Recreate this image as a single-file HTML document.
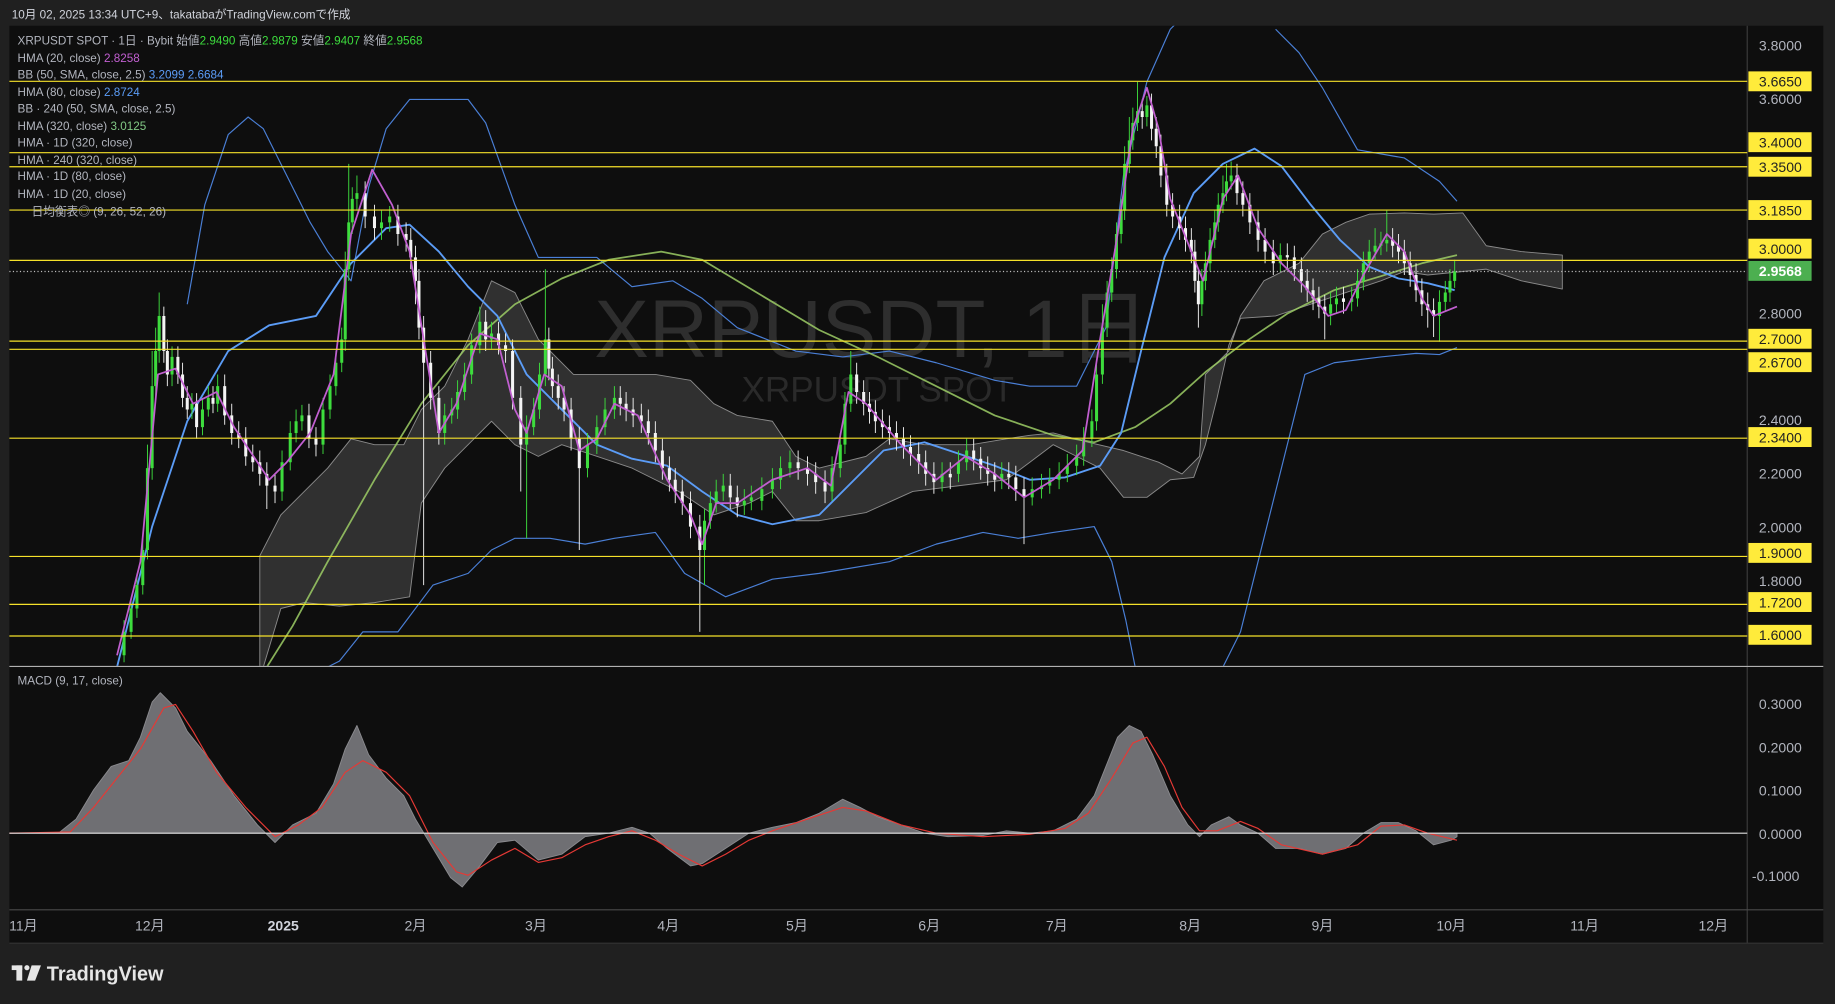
<!DOCTYPE html>
<html><head><meta charset="utf-8"><style>
html,body{margin:0;padding:0;background:#202020;overflow:hidden}
svg{display:block}
text{font-family:"Liberation Sans","Noto Sans CJK JP",sans-serif}
</style></head><body>
<svg width="1835" height="1004" viewBox="0 0 1568 858" preserveAspectRatio="none" xmlns="http://www.w3.org/2000/svg">
<defs>
<clipPath id="cm"><rect x="8" y="22" width="1485" height="547"/></clipPath>
<clipPath id="cd"><rect x="8" y="570" width="1485" height="206"/></clipPath>
</defs>
<rect width="1568" height="858" fill="#202020"/>
<text x="10" y="16" font-size="10" fill="#d1d4dc">10月 02, 2025 13:34 UTC+9、takatabaがTradingView.comで作成</text>
<rect x="8" y="22" width="1550" height="784" fill="#0e0e0e"/>
<line x1="1493" y1="22" x2="1493" y2="806" stroke="#3a3a3a"/>
<text x="745" y="305" font-size="70" fill="#2e2e2e" text-anchor="middle">XRPUSDT, 1日</text>
<text x="750" y="343" font-size="30" fill="#2a2a2a" text-anchor="middle">XRPUSDT SPOT</text>

<g clip-path="url(#cm)" fill="none" stroke-linejoin="round">
<polygon fill="#3a3a3a" fill-opacity="0.8" stroke="#8a8a8a" stroke-width="0.8" points="222,475 240,440 260,420 280,400 300,375 320,380 345,380 360,350 380,330 400,290 420,240 440,250 460,290 490,320 520,320 560,320 590,325 610,345 630,355 660,360 680,390 700,400 740,390 760,375 790,380 830,380 860,375 880,372 900,370 930,378 960,385 990,395 1010,405 1025,390 1030,320 1050,300 1060,270 1080,240 1110,225 1130,200 1150,190 1170,183 1200,182 1225,183 1250,182 1270,210 1300,215 1335,218 1335,247 1300,240 1270,230 1250,232 1220,235 1200,232 1180,240 1150,250 1120,260 1090,270 1060,272 1050,295 1040,340 1030,380 1020,408 1000,410 980,425 960,425 940,400 920,390 900,380 880,395 860,410 820,415 780,420 740,438 700,445 680,445 660,420 640,430 610,440 580,420 560,410 540,400 510,390 480,380 460,390 440,380 420,360 400,380 380,400 360,430 350,510 320,515 290,518 260,515 240,520 225,570 222,570"/>
<polyline stroke="#4a7fd6" stroke-width="1" points="160,260 175,175 195,115 212,100 225,110 245,150 265,190 280,215 300,240 315,160 330,110 350,85 400,85 415,105 440,175 460,220 510,220 540,245 575,240 600,255 630,280 680,300 720,305 760,300 800,310 850,325 880,330 920,330 945,280 960,150 980,70 1000,25 1010,15"/>
<polyline stroke="#4a7fd6" stroke-width="1" points="1090,25 1110,45 1130,75 1160,128 1200,135 1230,155 1245,172"/>
<polyline stroke="#4a7fd6" stroke-width="1" points="280,570 290,565 310,540 340,540 370,500 400,490 420,470 440,460 470,460 500,465 525,460 560,455 585,490 620,510 660,495 700,490 760,480 800,465 840,455 870,460 900,455 935,450 950,480 962,530 970,570"/>
<polyline stroke="#4a7fd6" stroke-width="1" points="1045,570 1060,540 1080,460 1100,380 1115,320 1140,310 1180,305 1210,302 1230,303 1245,297"/>
<polyline stroke="#9ccc65" stroke-opacity="0.85" stroke-width="1.5" points="228,570 250,535 280,480 320,410 360,345 400,295 440,260 480,238 520,222 565,215 600,222 650,252 700,282 750,305 800,330 850,355 900,372 935,378 970,365 1000,345 1030,318 1060,295 1100,268 1140,248 1180,236 1215,225 1245,218"/>
<polyline stroke="#5b9cf6" stroke-width="1.6" points="100,570 130,450 160,360 195,300 230,278 270,270 300,225 330,195 350,192 375,215 400,245 425,270 450,320 480,350 510,380 540,392 570,398 600,420 630,440 660,448 700,440 730,410 755,385 790,378 820,388 850,398 880,410 910,408 940,398 958,370 975,300 995,220 1020,165 1045,140 1072,127 1095,142 1120,175 1145,205 1170,228 1195,238 1220,242 1243,248"/>
<path stroke="#3ddc3d" stroke-width="0.8" d="M106 530V566M112 512V546M117 490V528M122 460V508M126 380V478M130 300V410M133 280V340M136 250V310M147 296V330M164 336V358M173 340V372M178 330V356M186 320V352M241 385V428M248 360V402M253 350V378M258 346V368M276 340V388M282 320V358M287 300V338M292 280V318M295 215V300M298 140V240M301 160V200M305 150V180M326 180V205M333 176V198M380 345V380M386 340V362M391 325V358M397 310V342M403 285V328M410 262V302M420 275V298M450 355V460M456 340V372M461 310V358M466 230V330M502 370V408M510 355V388M517 340V372M525 330V358M602 435V500M607 420V452M612 410V438M618 405V428M636 418V440M642 415V436M651 408V436M660 400V426M667 390V418M675 385V408M711 390V428M718 370V408M722 335V388M727 300V352M805 395V420M819 385V412M826 375V402M856 395V418M882 408V432M890 405V426M897 400V422M905 395V418M912 388V412M920 380V406M926 365V398M933 350V382M937 310V368M942 260V328M946 240V288M950 220V258M954 190V238M958 170V208M961 125V188M965 100V148M968 92V128M972 70V112M980 82V108M1027 230V270M1030 215V248M1034 195V232M1038 180V212M1041 165V198M1045 150V182M1048 140V172M1052 138V162M1094 208V232M1137 250V278M1142 245V268M1155 245V266M1160 230V262M1165 215V248M1170 205V232M1175 195V222M1180 198V218M1185 180V215M1230 248V292M1235 240V266M1239 230V258M1243 222V246"/>
<path stroke="#f0f0f0" stroke-width="0.8" d="M140 262V310M143 290V330M152 296V328M156 310V348M160 330V358M168 336V375M182 330V353M192 320V363M198 345V380M204 360V383M210 365V398M216 380V403M222 385V415M228 395V435M235 405V430M264 345V383M270 365V390M312 155V195M320 175V205M340 175V210M347 190V215M351 195V230M355 210V260M358 230V290M362 270V500M368 300V350M375 330V380M415 265V300M426 275V303M432 285V310M438 290V350M445 330V420M469 280V325M472 305V340M477 320V350M482 330V360M488 340V385M495 365V470M530 330V355M535 335V360M541 340V365M548 345V370M554 350V380M560 360V395M566 375V410M572 390V420M577 400V430M583 410V440M590 420V460M598 440V540M624 405V435M630 415V442M682 385V410M690 390V415M697 395V422M705 402V430M732 310V345M738 325V355M743 335V362M748 342V370M754 350V375M760 355V380M766 360V385M772 365V392M778 372V398M785 378V405M791 385V415M798 395V422M812 395V418M832 375V402M838 382V410M844 390V415M850 395V420M862 395V418M868 398V428M875 408V465M976 85V110M984 80V120M988 100V135M992 115V160M997 140V185M1002 165V195M1008 175V205M1013 185V215M1018 195V225M1021 205V250M1024 230V280M1057 140V175M1062 155V185M1068 165V200M1075 180V215M1081 195V225M1088 205V235M1100 208V230M1106 210V240M1112 220V250M1117 230V258M1122 238V265M1127 245V272M1132 252V290M1148 245V268M1190 195V220M1195 200V225M1200 205V235M1205 215V245M1210 225V258M1215 238V270M1220 250V280M1225 255V288"/>
<path stroke="#3ddc3d" stroke-width="2.6" d="M106 540V560M112 520V540M117 500V520M122 470V500M126 400V470M130 330V400M133 300V330M136 270V300M147 305V320M164 345V350M173 350V365M178 340V350M186 330V345M241 395V420M248 370V395M253 360V370M258 355V360M276 350V380M282 330V350M287 310V330M292 290V310M295 230V290M298 190V230M301 170V190M305 165V170M326 190V195M333 185V190M380 355V370M386 350V355M391 335V350M397 320V335M403 295V320M410 275V295M420 285V290M450 365V380M456 350V365M461 320V350M466 290V320M502 380V400M510 365V380M517 350V365M525 340V350M602 445V470M607 430V445M612 420V430M618 415V420M636 428V432M642 425V428M651 418V428M660 410V418M667 400V410M675 395V400M711 400V420M718 380V400M722 345V380M727 320V345M805 405V412M819 395V405M826 385V395M856 405V410M882 418V425M890 415V418M897 410V415M905 405V410M912 398V405M920 390V398M926 375V390M933 360V375M937 320V360M942 280V320M946 250V280M950 230V250M954 200V230M958 180V200M961 140V180M965 120V140M968 105V120M972 95V105M980 90V100M1027 240V260M1030 225V240M1034 205V225M1038 190V205M1041 175V190M1045 165V175M1048 155V165M1052 150V155M1094 218V225M1137 260V268M1142 255V260M1155 255V258M1160 240V255M1165 225V240M1170 215V225M1175 210V215M1180 208V210M1185 205V208M1230 258V270M1235 250V258M1239 240V250M1243 232V240"/>
<path stroke="#f4f4f4" stroke-width="2.6" d="M140 270V300M143 300V320M152 305V320M156 320V340M160 340V350M168 345V365M182 340V345M192 330V355M198 355V370M204 370V375M210 375V390M216 390V395M222 395V405M228 405V415M235 415V420M264 355V375M270 375V380M312 165V185M320 185V195M340 185V200M347 200V205M351 205V220M355 220V240M358 240V280M362 280V310M368 310V340M375 340V370M415 275V290M426 285V295M432 295V300M438 300V340M445 340V380M469 290V315M472 315V330M477 330V340M482 340V350M488 350V375M495 375V400M530 340V345M535 345V350M541 350V355M548 355V360M554 360V370M560 370V385M566 385V400M572 400V410M577 410V420M583 420V430M590 430V450M598 450V470M624 415V425M630 425V432M682 395V400M690 400V405M697 405V412M705 412V420M732 320V335M738 335V345M743 345V352M748 352V360M754 360V365M760 365V370M766 370V375M772 375V382M778 382V388M785 388V395M791 395V405M798 405V412M812 405V408M832 385V392M838 392V400M844 400V405M850 405V410M862 405V408M868 408V418M875 418V425M976 95V100M984 90V110M988 110V125M992 125V150M997 150V175M1002 175V185M1008 185V195M1013 195V205M1018 205V215M1021 215V240M1024 240V260M1057 150V165M1062 165V175M1068 175V190M1075 190V205M1081 205V215M1088 215V225M1100 218V220M1106 220V230M1112 230V240M1117 240V248M1122 248V255M1127 255V262M1132 262V268M1148 255V258M1190 205V210M1195 210V215M1200 215V225M1205 225V235M1210 235V248M1215 248V260M1220 260V265M1225 265V270"/>
<polyline stroke="#c15fd0" stroke-width="1.5" points="100,560 120,480 135,320 150,315 165,345 185,335 200,365 230,410 245,395 265,370 285,320 300,200 318,145 335,175 350,215 362,290 375,370 390,345 410,285 425,290 440,350 450,370 465,320 480,330 495,385 510,375 525,345 545,355 570,410 590,440 600,465 612,430 630,430 660,410 690,400 710,415 725,335 740,345 770,380 800,410 825,390 850,405 875,425 900,410 925,385 940,290 955,200 968,110 980,75 990,110 1000,170 1018,215 1028,240 1045,170 1058,150 1075,195 1095,225 1115,245 1135,270 1150,265 1165,235 1185,200 1200,215 1215,255 1225,270 1245,262"/>
</g>

<g clip-path="url(#cd)" stroke-linejoin="round">
<polygon fill="#7a7a7e" fill-opacity="0.9" stroke="#8a8a8e" stroke-width="0.8" points="8,712 50,712 65,700 80,675 95,655 110,650 120,630 130,600 137,592 150,605 160,625 180,650 200,680 220,705 235,720 250,705 270,695 285,670 295,640 305,620 315,645 330,665 345,680 355,700 370,725 385,750 395,758 410,740 425,720 440,718 460,735 480,730 500,715 520,712 540,707 555,712 570,725 590,740 600,738 620,725 640,712 660,707 680,703 700,695 720,683 735,690 750,698 770,705 790,712 810,715 840,714 860,710 880,712 900,710 920,700 935,680 945,655 955,630 965,620 975,625 985,645 1000,680 1015,705 1025,715 1035,705 1050,698 1060,705 1075,712 1090,725 1110,725 1130,730 1150,725 1165,712 1180,703 1195,703 1210,710 1225,722 1240,718 1245,715 1245,712"/>
<polyline fill="none" stroke="#e53935" stroke-width="1" points="8,712 60,711 80,690 100,665 120,640 140,605 150,602 165,625 185,660 210,690 235,715 255,705 275,690 295,660 310,650 330,660 350,680 370,720 390,745 400,748 420,735 440,725 460,737 480,733 500,722 520,715 540,710 560,718 580,730 600,740 620,730 640,718 660,710 690,700 720,690 740,693 770,705 800,712 840,715 880,713 910,708 930,695 950,665 968,635 980,630 995,655 1010,690 1025,710 1040,710 1060,702 1075,708 1095,722 1130,730 1160,722 1180,706 1200,705 1220,712 1245,718"/>
</g>
<line x1="8" y1="569.5" x2="1558" y2="569.5" stroke="#b0b0b0"/>
<line x1="8" y1="777.5" x2="1558" y2="777.5" stroke="#4a4a4a"/>
<line x1="8" y1="806" x2="1558" y2="806" stroke="#333"/>
<line x1="8" y1="712" x2="1493" y2="712" stroke="#e0e0e0"/>

<g stroke="#f5e12a" stroke-width="1">
<line x1="8" y1="69.5" x2="1493" y2="69.5"/><line x1="8" y1="130.5" x2="1493" y2="130.5"/><line x1="8" y1="142.5" x2="1493" y2="142.5"/><line x1="8" y1="179.5" x2="1493" y2="179.5"/><line x1="8" y1="222.5" x2="1493" y2="222.5"/><line x1="8" y1="291.5" x2="1493" y2="291.5"/><line x1="8" y1="298.5" x2="1493" y2="298.5"/><line x1="8" y1="374.5" x2="1493" y2="374.5"/><line x1="8" y1="475.5" x2="1493" y2="475.5"/><line x1="8" y1="516.5" x2="1493" y2="516.5"/><line x1="8" y1="543.5" x2="1493" y2="543.5"/>
</g>
<line x1="8" y1="232" x2="1493" y2="232" stroke="#bbb" stroke-dasharray="1,2"/>

<g font-size="10" fill="#b2b5be">
<text x="15" y="38">XRPUSDT SPOT · 1日 · Bybit  始値<tspan fill="#3ddc3d">2.9490</tspan>  高値<tspan fill="#3ddc3d">2.9879</tspan>  安値<tspan fill="#3ddc3d">2.9407</tspan>  終値<tspan fill="#3ddc3d">2.9568</tspan></text>
<text x="15" y="53">HMA (20, close)  <tspan fill="#c15fd0">2.8258</tspan></text>
<text x="15" y="67">BB (50, SMA, close, 2.5)  <tspan fill="#5b9cf6">3.2099  2.6684</tspan></text>
<text x="15" y="82">HMA (80, close)  <tspan fill="#5b9cf6">2.8724</tspan></text>
<text x="15" y="96">BB · 240 (50, SMA, close, 2.5)</text>
<text x="15" y="111">HMA (320, close)  <tspan fill="#81c784">3.0125</tspan></text>
<text x="15" y="125">HMA · 1D (320, close)</text>
<text x="15" y="140">HMA · 240 (320, close)</text>
<text x="15" y="154">HMA · 1D (80, close)</text>
<text x="15" y="169">HMA · 1D (20, close)</text>
<text x="27" y="184">日均衡表◎ (9, 26, 52, 26)</text>
<text x="15" y="585">MACD (9, 17, close)</text>
</g>

<g font-size="12" fill="#b2b5be">
<text x="1503" y="43">3.8000</text><text x="1503" y="89">3.6000</text><text x="1503" y="272">2.8000</text><text x="1503" y="363">2.4000</text><text x="1503" y="409">2.2000</text><text x="1503" y="455">2.0000</text><text x="1503" y="501">1.8000</text>
<text x="1503" y="606">0.3000</text><text x="1503" y="643">0.2000</text><text x="1503" y="680">0.1000</text><text x="1503" y="717">0.0000</text><text x="1497" y="753">-0.1000</text>
</g>
<g font-size="12">
<rect x="1494" y="61" width="54" height="17" fill="#ffeb3b"/><text x="1503" y="74" fill="#222">3.6650</text>
<rect x="1494" y="113" width="54" height="17" fill="#ffeb3b"/><text x="1503" y="126" fill="#222">3.4000</text>
<rect x="1494" y="134" width="54" height="17" fill="#ffeb3b"/><text x="1503" y="147" fill="#222">3.3500</text>
<rect x="1494" y="171" width="54" height="17" fill="#ffeb3b"/><text x="1503" y="184" fill="#222">3.1850</text>
<rect x="1494" y="204" width="54" height="17" fill="#ffeb3b"/><text x="1503" y="217" fill="#222">3.0000</text>
<rect x="1494" y="223" width="54" height="17" fill="#4caf50"/><text x="1503" y="236" fill="#fff" font-weight="bold">2.9568</text>
<rect x="1494" y="281" width="54" height="17" fill="#ffeb3b"/><text x="1503" y="294" fill="#222">2.7000</text>
<rect x="1494" y="301" width="54" height="17" fill="#ffeb3b"/><text x="1503" y="314" fill="#222">2.6700</text>
<rect x="1494" y="365" width="54" height="17" fill="#ffeb3b"/><text x="1503" y="378" fill="#222">2.3400</text>
<rect x="1494" y="464" width="54" height="17" fill="#ffeb3b"/><text x="1503" y="477" fill="#222">1.9000</text>
<rect x="1494" y="506" width="54" height="17" fill="#ffeb3b"/><text x="1503" y="519" fill="#222">1.7200</text>
<rect x="1494" y="534" width="54" height="17" fill="#ffeb3b"/><text x="1503" y="547" fill="#222">1.6000</text>
</g>
<g font-size="12" fill="#b2b5be" text-anchor="middle">
<text x="20" y="795">11月</text><text x="128" y="795">12月</text>
<text x="242" y="795" font-weight="bold" fill="#d1d4dc">2025</text>
<text x="355" y="795">2月</text><text x="458" y="795">3月</text><text x="571" y="795">4月</text>
<text x="681" y="795">5月</text><text x="794" y="795">6月</text><text x="903" y="795">7月</text>
<text x="1017" y="795">8月</text><text x="1130" y="795">9月</text><text x="1240" y="795">10月</text>
<text x="1354" y="795">11月</text><text x="1464" y="795">12月</text>
</g>
<g fill="#e6e6e6">
<rect x="10" y="825" width="9" height="4"/><rect x="14" y="825" width="5" height="13"/>
<circle cx="23" cy="827" r="2.2"/>
<polygon points="27,825 35,825 30,838 23,838"/>
</g>
<text x="40" y="838" font-size="17" fill="#e6e6e6" font-weight="bold">TradingView</text>
</svg>
</body></html>
